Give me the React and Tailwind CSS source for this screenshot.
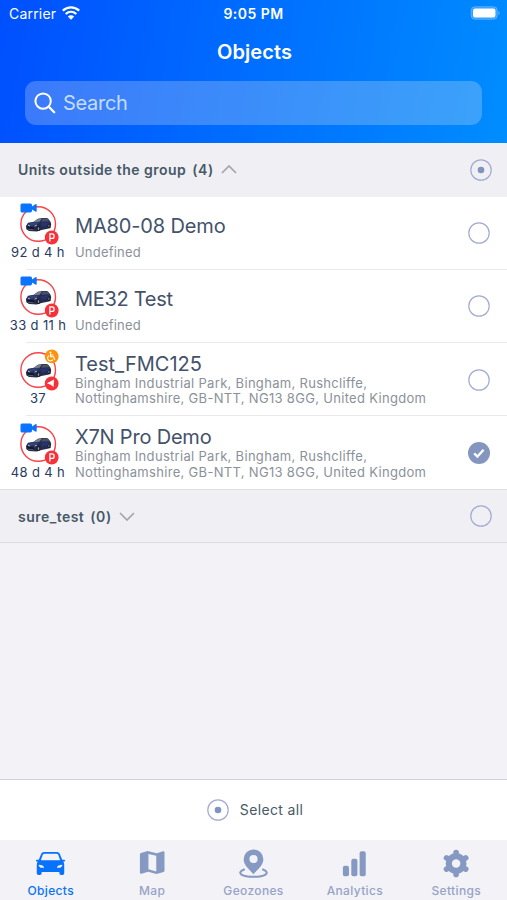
import React, { useState } from "react";

const ADDRESS = ["Bingham Industrial Park, Bingham, Rushcliffe,", "Nottinghamshire, GB-NTT, NG13 8GG, United Kingdom"];

const UNITS = [
  { id: "ma80", name: "MA80-08 Demo", time: "92 d 4 h", camera: true, parked: true, tracking: "tracking-[-0.15px]" },
  { id: "me32", name: "ME32 Test", time: "33 d 11 h", camera: true, parked: true, tracking: "tracking-[-0.3px]" },
  { id: "fmc", name: "Test_FMC125", time: "37", address: ADDRESS, tracking: "tracking-[0px]" },
  { id: "x7n", name: "X7N Pro Demo", time: "48 d 4 h", camera: true, parked: true, address: ADDRESS, tracking: "tracking-[-0.2px]" },
];

const SelectCircle = ({ state = "empty" }) => (
  <svg viewBox="0 0 22 22" className="h-[22px] w-[22px] shrink-0">
    {state === "checked" ? (
      <>
        <circle cx="11" cy="11" r="11" fill="#8496bf" />
        <path d="M6.2 11.4l3.2 3.2 6.2-6.8" fill="none" stroke="#fff" strokeWidth="2.3" />
      </>
    ) : (
      <circle cx="11" cy="11" r="10.2" fill="none" stroke="#a2abd2" strokeWidth="1.2" />
    )}
    {state === "partial" && <circle cx="11" cy="11" r="3.3" fill="#8095bd" />}
  </svg>
);

const CarPhoto = () => (
  <>
    <path d="M26 226l2-3.2 5.8-1 4-3.1c3-.9 8-1 10.2-.3l2.5 3.3.7 2.4-.6 3.8-3 .9-6.1 1.1-4.7 1.7-7.8-.6-2.7-1.8z" fill="#252b4c" />
    <path d="M33.6 221.9l4.3-2.9 4.2-.5-2.6 3.3-5.9.5z" fill="#77808f" />
    <path d="M42.8 218.6l4.7.2 2.3 2.5-8.6.5z" fill="#4b5263" />
    <path d="M27 224.7l4.6-2.1 8.2-.2-3.9 2.3-6.3 1.5z" fill="#30457f" />
    <path d="M40.5 223l9-1-.2 3-7.5 2z" fill="#263473" />
    <path d="M26.4 226.3l7.5 1.2.5 2-6-.5z" fill="#14171f" />
    <path d="M28 225.2l1.8.8M34.6 226.1l2.3-.9" stroke="#dce3ed" strokeWidth=".8" />
    <path d="M28.2 229.2l5.2.5" stroke="#8c93a2" strokeWidth=".5" />
    <ellipse cx="38.4" cy="228.5" rx="1.8" ry="2.6" fill="#171a21" />
    <ellipse cx="38.5" cy="228.5" rx=".8" ry="1.5" fill="#8d929c" />
    <ellipse cx="48.9" cy="225.8" rx="1.3" ry="2.3" fill="#171a21" />
    <ellipse cx="48.9" cy="225.8" rx=".5" ry="1.2" fill="#898f98" />
  </>
);

const UnitIcon = ({ camera, parked }) => (
  <svg viewBox="16 201 46 45" className="h-[45px] w-[46px]">
    <circle cx="38.2" cy="224" r="17.3" fill="none" stroke="#f84349" strokeWidth="1.4" />
    <CarPhoto />
    {camera && (
      <path d="M22 203.6h8.5q1.5 0 1.5 1.5v1.3l3.3-2.1q1.4-.6 1.4.6v6q0 1.2-1.4.6l-3.3-2.1v1.4q0 1.7-1.7 1.7h-8.2q-1.6 0-1.6-1.6v-5.8q0-1.5 1.5-1.5z" fill="#0874ff" />
    )}
    <circle cx="51.7" cy="237.5" r="6.9" fill="#fa3038" />
    {parked ? (
      <path d="M49.9 241.5v-7.6h2a2.2 2.2 0 010 4.5h-2" fill="none" stroke="#fff" strokeWidth="1.3" />
    ) : (
      <>
        <path d="M46.8 237.2l7.3-3.8-.6 7.7-2.8-2.4z" fill="#fff" />
        <circle cx="51.7" cy="210.4" r="6.9" fill="#ff920b" />
        <circle cx="50.5" cy="206.6" r="1" fill="#fff" />
        <path d="M50.5 207.6v3.2h3l1.4 3M50.6 209h2.8M49.1 209.6a2.8 2.8 0 103.8 3.8" fill="none" stroke="#fff" strokeWidth="1.1" />
      </>
    )}
  </svg>
);

const UnitRow = ({ unit, checked, last, onToggle }) => (
  <div className="relative flex h-[73.2px] items-start">
    <div className="flex w-[75px] shrink-0 flex-col items-center pl-[2px] pt-[4.5px]">
      <UnitIcon camera={unit.camera} parked={unit.parked} />
      <div className="-ml-px -mt-[2px] whitespace-nowrap text-center text-[13px] leading-4 tracking-[0.35px] text-[#283963]">{unit.time}</div>
    </div>
    <div className={`min-w-0 flex-1 whitespace-nowrap ${unit.address ? "pt-[9px]" : "pt-[17px]"}`}>
      <div className={`text-[20px] leading-6 text-[#43526a] ${unit.tracking}`}>{unit.name}</div>
      {unit.address ? (
        <div className="-mt-[0.3px] text-[13px] leading-[15.7px] tracking-[0.31px] text-[#8b9199]">
          {unit.address.map((line) => (
            <div key={line}>{line}</div>
          ))}
        </div>
      ) : (
        <div className="mt-[6px] text-[13px] leading-4 tracking-[0.2px] text-[#8b9199]">Undefined</div>
      )}
    </div>
    <button type="button" onClick={onToggle} className="mr-[17px] mt-[25.7px]">
      <SelectCircle state={checked ? "checked" : "empty"} />
    </button>
    {!last && <div className="absolute bottom-0 left-[26px] right-0 h-px bg-[#e9e9ed]" />}
  </div>
);

const Chevron = ({ open }) => (
  <svg viewBox="0 0 16 9" className={`h-[9px] w-4 ${open ? "" : "rotate-180"}`}>
    <path d="M1 8l7-7 7 7" fill="none" stroke="#a5a5a9" strokeWidth="1.7" />
  </svg>
);

const GroupHeader = ({ title, count, open, state }) => (
  <div className={`flex h-[54px] shrink-0 items-center bg-[#efeff4] pl-[18px] pr-[15px] ${open ? "" : "border-y border-[#dcdce1]"}`}>
    <span className="text-[14px] font-semibold tracking-[0.46px] text-[#475967]">{title}</span>
    <span className="ml-[6px] mr-[7px] text-[14px] font-semibold tracking-[0.6px] text-[#475967]">({count})</span>
    <Chevron open={open} />
    <div className="ml-auto">
      <SelectCircle state={state} />
    </div>
  </div>
);

const TABS = [
  {
    label: "Objects",
    icon: (
      <path fillRule="evenodd" d="M7.2 2h13.6q2 0 2.8 2l2.5 6h2q1 0 1 1t-1 1h-.9q1 1.5 1 3.5V24q0 1.8-1.8 1.8H25q-1.8 0-1.8-1.8v-1.3H4.8V24q0 1.8-1.8 1.8H1.6Q-.2 25.8-.2 24v-8.5q0-2 1-3.5H-.1q-1 0-1-1t1-1h2L4.4 4q.8-2 2.8-2zM7.8 3.8q-1.3 0-1.8 1.2L4 10.7h20L22 5q-.5-1.2-1.8-1.2zM1.7 15.2q.3 3.2 3.8 3.2h2q-.7-3-5.8-3.2zm24.6 0q-5.1.2-5.8 3.2h2q3.5 0 3.8-3.2z" />
    ),
  },
  {
    label: "Map",
    icon: <path fillRule="evenodd" d="M1 4.4q0-1 1-1.3l6.1-1.8q1-.3 2 0l8.2 2 6.7-1.9q1.4-.3 1.4 1.1v19q0 1-1 1.3l-6.3 1.8q-1 .3-2 0l-7.6-2-6.9 1.9Q1 24.9 1 23.5zM9.8 4.1v15.8l8.1 2.3V6z" />,
  },
  {
    label: "Geozones",
    icon: (
      <>
        <path fillRule="evenodd" d="M14-.6a10.2 10.2 0 00-10.2 10.2C3.8 15.8 10 20.4 14 25c4-4.6 10.2-9.2 10.2-15.4A10.2 10.2 0 0014-.6zm0 5.8a4.2 4.2 0 110 8.4 4.2 4.2 0 010-8.4z" />
        <path d="M4.2 20.2c-8.8 3.8-1.4 7.6 9.8 7.6s18.6-3.8 9.8-7.6" fill="none" stroke="currentColor" strokeWidth="2.1" strokeLinecap="round" />
      </>
    ),
  },
  {
    label: "Analytics",
    icon: (
      <>
        <rect x="2" y="16.4" width="6.3" height="10.8" rx="2" />
        <rect x="10.7" y="9.2" width="6.3" height="18" rx="2" />
        <rect x="19.3" y="1.3" width="6.3" height="25.9" rx="2" />
      </>
    ),
  },
  {
    label: "Settings",
    icon: (
      <g fill="none" stroke="currentColor">
        <circle cx="13.6" cy="14" r="7.6" strokeWidth="6.4" />
        <path
          strokeWidth="5.8"
          strokeLinecap="round"
          d="M13.6 4.6V2.7M13.6 23.4v1.9M5.46 9.3l-1.8-1.05M21.74 9.3l1.8-1.05M5.46 18.7l-1.8 1.05M21.74 18.7l1.8 1.05"
        />
      </g>
    ),
  },
];

const StatusBar = () => (
  <div className="grid h-[27px] grid-cols-3 items-center text-[14px] leading-4">
    <div className="flex items-center gap-[6px] pl-[9px] tracking-[0.2px]">
      <span>Carrier</span>
      <svg viewBox="0 0 18 14" className="-mt-[2px] h-[14px] w-[18px]" fill="none" stroke="#fff" strokeWidth="2.3">
        <path d="M.8 4.7c4.8-4.4 11.6-4.4 16.4 0M3.7 8c3.1-2.8 7.5-2.8 10.6 0" />
        <path d="M9 13.7L5.8 10.4q3.2-2.3 6.4 0z" fill="#fff" stroke="none" />
      </svg>
    </div>
    <div className="text-center font-semibold tracking-[0.45px]">9:05 PM</div>
    <svg viewBox="0 0 31 14" className="ml-auto mr-[6px] -mt-px h-[14px] w-[31px]">
      <rect x="1.1" y=".7" width="26.2" height="12.6" rx="3.8" fill="#fff" fillOpacity=".2" stroke="#fff" strokeOpacity=".25" />
      <rect x="3" y="2.6" width="22.4" height="8.9" rx="2" fill="#fff" />
      <path d="M28.6 5q2 2 0 4z" fill="#fff" fillOpacity=".5" />
    </svg>
  </div>
);

const App = () => {
  const [selectedIds, setSelectedIds] = useState(["x7n"]);

  const toggleUnit = (id) => {
    setSelectedIds((prev) => (prev.includes(id) ? prev.filter((entry) => entry !== id) : [...prev, id]));
  };

  const groupState = !selectedIds.length ? "empty" : selectedIds.length === UNITS.length ? "checked" : "partial";

  return (
    <div className="flex h-[900px] w-[507px] flex-col overflow-hidden bg-[#f2f2f7] font-['Inter',sans-serif]">
      <header className="h-[142.6px] shrink-0 bg-linear-[100deg,#004fff,#008dff] text-white">
        <StatusBar />
        <h1 className="mt-[11px] pl-[2px] text-center text-[20px] font-semibold leading-7 tracking-[0.1px]">Objects</h1>
        <div className="mx-[25px] mt-[14.6px] flex h-[44px] items-center rounded-[11px] bg-[#ededed]/25 pl-[9px]">
          <svg viewBox="0 0 22 22" className="h-[22px] w-[22px]" fill="none" stroke="#fff" strokeWidth="2" strokeLinecap="round">
            <circle cx="9.1" cy="9.1" r="7.7" />
            <path d="M14.8 14.8l5.4 5.4" strokeWidth="2.3" />
          </svg>
          <span className="ml-[7px] text-[20px] tracking-[-0.3px] text-[#c6dcfc]">Search</span>
        </div>
      </header>

      <GroupHeader title="Units outside the group" count={UNITS.length} open state={groupState} />
      <div className="shrink-0 bg-white">
        {UNITS.map((unit, index) => (
          <UnitRow
            key={unit.id}
            unit={unit}
            checked={selectedIds.includes(unit.id)}
            last={index === UNITS.length - 1}
            onToggle={() => toggleUnit(unit.id)}
          />
        ))}
      </div>
      <GroupHeader title="sure_test" count={0} state="empty" />

      <div className="mt-auto flex h-[61px] shrink-0 items-center justify-center gap-[11px] border-t border-[#d0d0da] bg-white pl-[3px] text-[14px] tracking-[0.35px] text-[#475967]">
        <SelectCircle state="partial" />
        <span className="-mt-px">Select all</span>
      </div>
      <nav className="grid h-[60px] shrink-0 grid-cols-5 bg-[#f2f2f7]">
        {TABS.map((tab, index) => (
          <button
            key={tab.label}
            type="button"
            className={`flex flex-col items-center pt-[9px] ${index === 0 ? "text-[#0872fa]" : "text-[#8599c3]"}`}
          >
            <svg viewBox="-2 -1 32 30" className="h-[29px] w-[31px]" fill="currentColor">
              {tab.icon}
            </svg>
            <span className={`mt-[5px] text-[12px] font-medium leading-4 tracking-[0.35px] ${index === 0 ? "" : "text-[#97a3c6]"}`}>{tab.label}</span>
          </button>
        ))}
      </nav>
    </div>
  );
};

export default App;
